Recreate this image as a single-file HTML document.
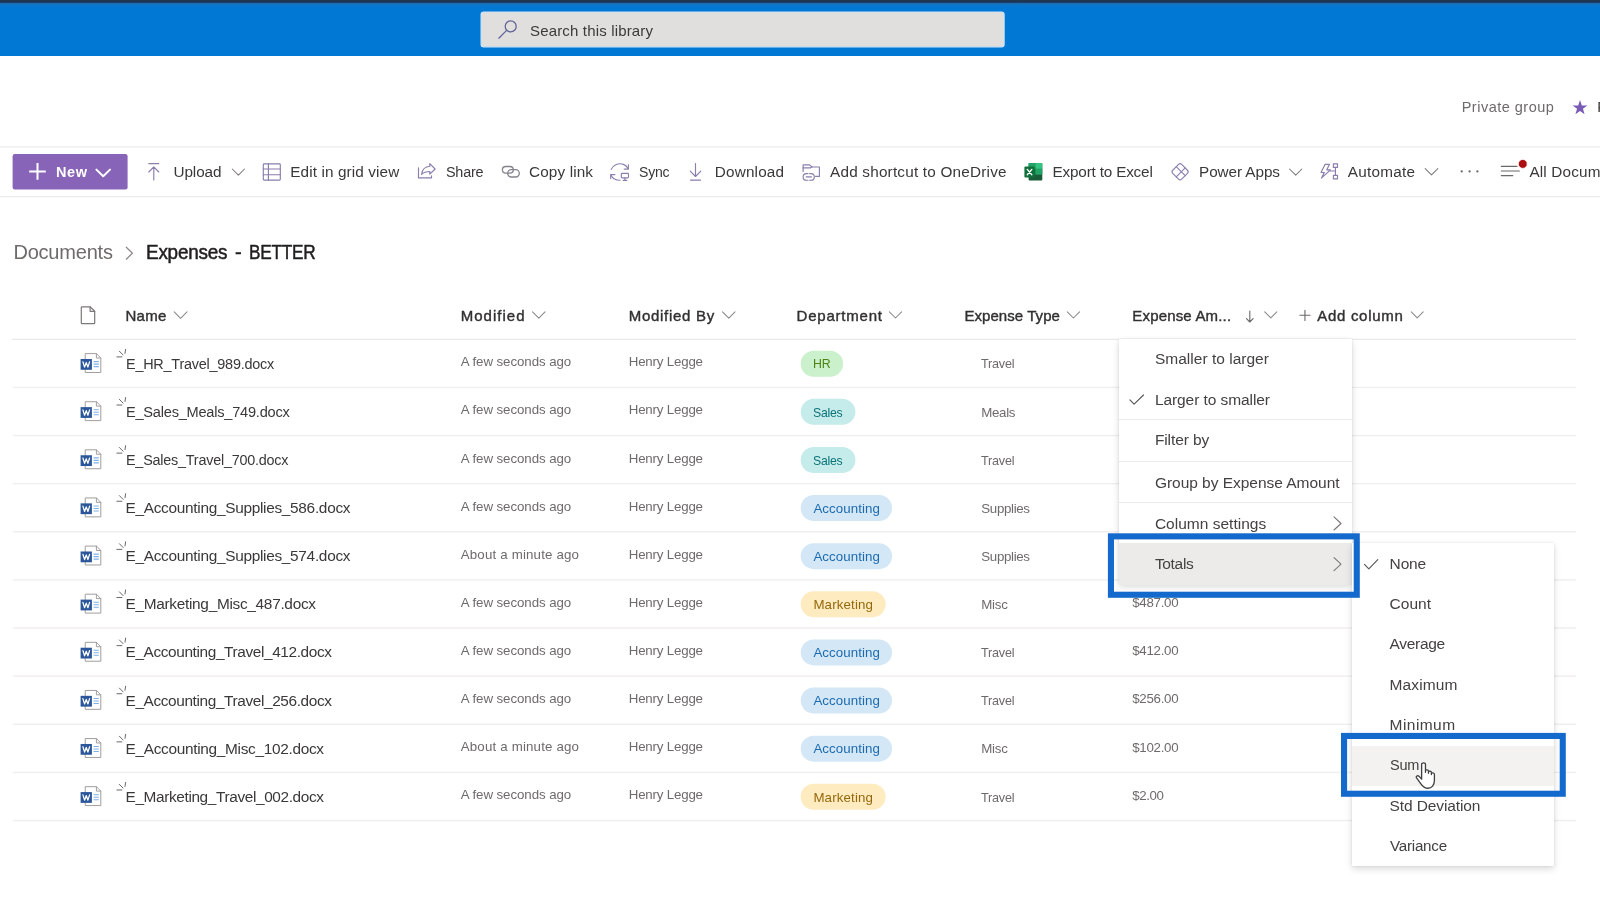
<!DOCTYPE html>
<html><head><meta charset="utf-8"><title>Expenses - BETTER</title>
<style>
html,body{margin:0;padding:0}
body{width:1600px;height:900px;overflow:hidden;background:#fff;font-family:"Liberation Sans",sans-serif}
#page{position:relative;width:1600px;height:900px;overflow:hidden;background:#fff}
.t{position:absolute;white-space:nowrap;line-height:1}
.tl{position:absolute;left:0;top:0;width:1600px;height:900px;will-change:transform}
.b{position:absolute}
.pill{position:absolute;height:26px;border-radius:13px}
.ln{position:absolute;left:12px;width:1564px;height:1px;background:#edebe9}
svg{position:absolute;left:0;top:0;overflow:visible}
.menu{position:absolute;background:#fff;box-shadow:0 3px 7px rgba(0,0,0,.14),0 0 2.5px rgba(0,0,0,.11)}
.sep{position:absolute;left:0;width:100%;height:1px;background:#edebe9}
</style></head>
<body>
<div id="page">
<div class="b" style="left:0;top:0;width:1600px;height:56px;background:linear-gradient(to bottom,#22374b 0,#17365a 2.3px,#1d6bb0 3.3px,#0e75ca 5px,#0078d4 7px,#0078d4 100%)"></div>
<svg width="1600" height="900" viewBox="0 0 1600 900" shape-rendering="auto"><rect x="481.1" y="12" width="523" height="34.8" rx="2.6" fill="#e1dfdd" stroke="#cfe4f6" stroke-width="1.2"/><rect x="12.6" y="154.1" width="115" height="35.3" rx="2.2" fill="#8764b8"/><rect x="0" y="146.3" width="1600" height="1.2" fill="#ebeae9"/><rect x="0" y="196.1" width="1600" height="1.2" fill="#ebeae9"/><rect x="12" y="338.75" width="1564" height="1.1" fill="#e7e6e5"/><rect x="13" y="386.72" width="1563" height="1.4" fill="#f0efee"/><rect x="13" y="434.84" width="1563" height="1.4" fill="#f0efee"/><rect x="13" y="482.96" width="1563" height="1.4" fill="#f0efee"/><rect x="13" y="531.08" width="1563" height="1.4" fill="#f0efee"/><rect x="13" y="579.20" width="1563" height="1.4" fill="#f0efee"/><rect x="13" y="627.32" width="1563" height="1.4" fill="#f0efee"/><rect x="13" y="675.44" width="1563" height="1.4" fill="#f0efee"/><rect x="13" y="723.56" width="1563" height="1.4" fill="#f0efee"/><rect x="13" y="771.68" width="1563" height="1.4" fill="#f0efee"/><rect x="13" y="819.80" width="1563" height="1.4" fill="#f0efee"/></svg>
<svg width="1600" height="900" viewBox="0 0 1600 900"><rect x="800.7" y="350.70" width="42.40" height="26" rx="13" fill="#caf0cc"/>
<rect x="800.7" y="398.82" width="54.70" height="26" rx="13" fill="#c5eceb"/>
<rect x="800.7" y="446.94" width="54.70" height="26" rx="13" fill="#c5eceb"/>
<rect x="800.7" y="495.06" width="91.30" height="26" rx="13" fill="#d4e7f6"/>
<rect x="800.7" y="543.18" width="91.30" height="26" rx="13" fill="#d4e7f6"/>
<rect x="800.7" y="591.30" width="84.90" height="26" rx="13" fill="#ffebc0"/>
<rect x="800.7" y="639.42" width="91.30" height="26" rx="13" fill="#d4e7f6"/>
<rect x="800.7" y="687.54" width="91.30" height="26" rx="13" fill="#d4e7f6"/>
<rect x="800.7" y="735.66" width="91.30" height="26" rx="13" fill="#d4e7f6"/>
<rect x="800.7" y="783.78" width="84.90" height="26" rx="13" fill="#ffebc0"/></svg>
<div class="tl"><span class="t" id="t0" style="left:530.00px;top:23.30px;font-size:15px;color:#3b3a39;letter-spacing:0.164px;">Search this library</span>
<span class="t" id="t1" style="left:1461.70px;top:99.73px;font-size:14.5px;color:#6e6c6a;letter-spacing:0.496px;">Private group</span>
<span class="t" id="t2" style="left:1597.20px;top:99.73px;font-size:14.5px;color:#3a3938;letter-spacing:-0.156px;">Following</span>
<span class="t" id="t3" style="left:56.00px;top:164.83px;font-size:14.5px;color:#ffffff;font-weight:700;letter-spacing:0.586px;">New</span>
<span class="t" id="t4" style="left:173.50px;top:164.15px;font-size:15.3px;color:#3a3938;letter-spacing:-0.097px;">Upload</span>
<span class="t" id="t5" style="left:290.30px;top:164.15px;font-size:15.3px;color:#3a3938;letter-spacing:0.111px;">Edit in grid view</span>
<span class="t" id="t6" style="left:445.50px;top:164.15px;font-size:15.3px;color:#3a3938;letter-spacing:-0.25px;transform:scaleX(0.9415);transform-origin:0 0;">Share</span>
<span class="t" id="t7" style="left:529.00px;top:164.15px;font-size:15.3px;color:#3a3938;letter-spacing:0.135px;">Copy link</span>
<span class="t" id="t8" style="left:638.50px;top:164.15px;font-size:15.3px;color:#3a3938;letter-spacing:-0.25px;transform:scaleX(0.9169);transform-origin:0 0;">Sync</span>
<span class="t" id="t9" style="left:714.80px;top:164.15px;font-size:15.3px;color:#3a3938;letter-spacing:0.167px;">Download</span>
<span class="t" id="t10" style="left:830.00px;top:164.15px;font-size:15.3px;color:#3a3938;letter-spacing:0.211px;">Add shortcut to OneDrive</span>
<span class="t" id="t11" style="left:1052.50px;top:164.15px;font-size:15.3px;color:#3a3938;letter-spacing:-0.184px;">Export to Excel</span>
<span class="t" id="t12" style="left:1199.00px;top:164.15px;font-size:15.3px;color:#3a3938;letter-spacing:-0.071px;">Power Apps</span>
<span class="t" id="t13" style="left:1347.80px;top:164.15px;font-size:15.3px;color:#3a3938;letter-spacing:0.245px;">Automate</span>
<span class="t" id="t14" style="left:1529.40px;top:164.15px;font-size:15.3px;color:#3a3938;letter-spacing:0.162px;">All Docum</span>
<span class="t" id="t15" style="left:13.40px;top:242.07px;font-size:20px;color:#6e6c6a;letter-spacing:-0.195px;">Documents</span>
<span class="t" id="t16" style="left:146.00px;top:242.07px;font-size:20px;color:#201f1e;-webkit-text-stroke:0.5px #201f1e;letter-spacing:-0.25px;transform:scaleX(0.9455);transform-origin:0 0;">Expenses</span>
<span class="t" id="t17" style="left:235.00px;top:242.07px;font-size:20px;color:#201f1e;-webkit-text-stroke:0.5px #201f1e;">-</span>
<span class="t" id="t18" style="left:248.80px;top:242.07px;font-size:20px;color:#201f1e;-webkit-text-stroke:0.5px #201f1e;letter-spacing:-0.25px;transform:scaleX(0.8602);transform-origin:0 0;">BETTER</span>
<span class="t" id="t19" style="left:125.40px;top:307.90px;font-size:15px;color:#323130;-webkit-text-stroke:0.4px #323130;letter-spacing:0.328px;">Name</span>
<span class="t" id="t20" style="left:460.75px;top:307.90px;font-size:15px;color:#323130;-webkit-text-stroke:0.4px #323130;letter-spacing:1.007px;">Modified</span>
<span class="t" id="t21" style="left:628.75px;top:307.90px;font-size:15px;color:#323130;-webkit-text-stroke:0.4px #323130;letter-spacing:0.713px;">Modified By</span>
<span class="t" id="t22" style="left:796.60px;top:307.90px;font-size:15px;color:#323130;-webkit-text-stroke:0.4px #323130;letter-spacing:0.781px;">Department</span>
<span class="t" id="t23" style="left:964.40px;top:307.90px;font-size:15px;color:#323130;-webkit-text-stroke:0.4px #323130;letter-spacing:0.064px;">Expense Type</span>
<span class="t" id="t24" style="left:1132.30px;top:307.90px;font-size:15px;color:#323130;-webkit-text-stroke:0.4px #323130;letter-spacing:0.173px;">Expense Am...</span>
<span class="t" id="t25" style="left:1317.20px;top:307.90px;font-size:15px;color:#323130;-webkit-text-stroke:0.4px #323130;letter-spacing:0.709px;">Add column</span>
<span class="t" id="t26" style="left:125.50px;top:355.71px;font-size:15.4px;color:#3a3938;letter-spacing:-0.25px;transform:scaleX(0.9378);transform-origin:0 0;">E_HR_Travel_989.docx</span>
<span class="t" id="t27" style="left:460.75px;top:355.34px;font-size:13.3px;color:#6e6c6a;letter-spacing:-0.070px;">A few seconds ago</span>
<span class="t" id="t28" style="left:628.75px;top:355.34px;font-size:13.3px;color:#6e6c6a;letter-spacing:-0.189px;">Henry Legge</span>
<span class="t" id="t29" style="left:813.40px;top:357.49px;font-size:13.3px;color:#4d8414;letter-spacing:-0.25px;transform:scaleX(0.9278);transform-origin:0 0;">HR</span>
<span class="t" id="t30" style="left:981.30px;top:357.49px;font-size:13.3px;color:#6e6c6a;letter-spacing:-0.25px;transform:scaleX(0.9516);transform-origin:0 0;">Travel</span>
<span class="t" id="t31" style="left:125.50px;top:403.83px;font-size:15.4px;color:#3a3938;letter-spacing:-0.25px;transform:scaleX(0.9481);transform-origin:0 0;">E_Sales_Meals_749.docx</span>
<span class="t" id="t32" style="left:460.75px;top:403.46px;font-size:13.3px;color:#6e6c6a;letter-spacing:-0.070px;">A few seconds ago</span>
<span class="t" id="t33" style="left:628.75px;top:403.46px;font-size:13.3px;color:#6e6c6a;letter-spacing:-0.189px;">Henry Legge</span>
<span class="t" id="t34" style="left:813.40px;top:405.61px;font-size:13.3px;color:#0c7378;letter-spacing:-0.25px;transform:scaleX(0.9205);transform-origin:0 0;">Sales</span>
<span class="t" id="t35" style="left:981.30px;top:405.61px;font-size:13.3px;color:#6e6c6a;letter-spacing:-0.346px;">Meals</span>
<span class="t" id="t36" style="left:125.50px;top:451.95px;font-size:15.4px;color:#3a3938;letter-spacing:-0.25px;transform:scaleX(0.9360);transform-origin:0 0;">E_Sales_Travel_700.docx</span>
<span class="t" id="t37" style="left:460.75px;top:451.58px;font-size:13.3px;color:#6e6c6a;letter-spacing:-0.070px;">A few seconds ago</span>
<span class="t" id="t38" style="left:628.75px;top:451.58px;font-size:13.3px;color:#6e6c6a;letter-spacing:-0.189px;">Henry Legge</span>
<span class="t" id="t39" style="left:813.40px;top:453.73px;font-size:13.3px;color:#0c7378;letter-spacing:-0.25px;transform:scaleX(0.9205);transform-origin:0 0;">Sales</span>
<span class="t" id="t40" style="left:981.30px;top:453.73px;font-size:13.3px;color:#6e6c6a;letter-spacing:-0.25px;transform:scaleX(0.9516);transform-origin:0 0;">Travel</span>
<span class="t" id="t41" style="left:125.50px;top:500.07px;font-size:15.4px;color:#3a3938;letter-spacing:-0.297px;">E_Accounting_Supplies_586.docx</span>
<span class="t" id="t42" style="left:460.75px;top:499.70px;font-size:13.3px;color:#6e6c6a;letter-spacing:-0.070px;">A few seconds ago</span>
<span class="t" id="t43" style="left:628.75px;top:499.70px;font-size:13.3px;color:#6e6c6a;letter-spacing:-0.189px;">Henry Legge</span>
<span class="t" id="t44" style="left:813.40px;top:501.85px;font-size:13.3px;color:#1c6bb0;letter-spacing:0.089px;">Accounting</span>
<span class="t" id="t45" style="left:981.30px;top:501.85px;font-size:13.3px;color:#6e6c6a;letter-spacing:-0.331px;">Supplies</span>
<span class="t" id="t46" style="left:125.50px;top:548.19px;font-size:15.4px;color:#3a3938;letter-spacing:-0.297px;">E_Accounting_Supplies_574.docx</span>
<span class="t" id="t47" style="left:460.75px;top:547.82px;font-size:13.3px;color:#6e6c6a;letter-spacing:0.172px;">About a minute ago</span>
<span class="t" id="t48" style="left:628.75px;top:547.82px;font-size:13.3px;color:#6e6c6a;letter-spacing:-0.189px;">Henry Legge</span>
<span class="t" id="t49" style="left:813.40px;top:549.97px;font-size:13.3px;color:#1c6bb0;letter-spacing:0.089px;">Accounting</span>
<span class="t" id="t50" style="left:981.30px;top:549.97px;font-size:13.3px;color:#6e6c6a;letter-spacing:-0.331px;">Supplies</span>
<span class="t" id="t51" style="left:125.50px;top:596.31px;font-size:15.4px;color:#3a3938;letter-spacing:-0.297px;">E_Marketing_Misc_487.docx</span>
<span class="t" id="t52" style="left:460.75px;top:595.94px;font-size:13.3px;color:#6e6c6a;letter-spacing:-0.070px;">A few seconds ago</span>
<span class="t" id="t53" style="left:628.75px;top:595.94px;font-size:13.3px;color:#6e6c6a;letter-spacing:-0.189px;">Henry Legge</span>
<span class="t" id="t54" style="left:813.40px;top:598.09px;font-size:13.3px;color:#94690c;letter-spacing:0.151px;">Marketing</span>
<span class="t" id="t55" style="left:981.30px;top:598.09px;font-size:13.3px;color:#6e6c6a;letter-spacing:-0.276px;">Misc</span>
<span class="t" id="t56" style="left:1132.20px;top:596.24px;font-size:13.3px;color:#6e6c6a;letter-spacing:-0.280px;">$487.00</span>
<span class="t" id="t57" style="left:125.50px;top:644.43px;font-size:15.4px;color:#3a3938;letter-spacing:-0.380px;">E_Accounting_Travel_412.docx</span>
<span class="t" id="t58" style="left:460.75px;top:644.06px;font-size:13.3px;color:#6e6c6a;letter-spacing:-0.070px;">A few seconds ago</span>
<span class="t" id="t59" style="left:628.75px;top:644.06px;font-size:13.3px;color:#6e6c6a;letter-spacing:-0.189px;">Henry Legge</span>
<span class="t" id="t60" style="left:813.40px;top:646.21px;font-size:13.3px;color:#1c6bb0;letter-spacing:0.089px;">Accounting</span>
<span class="t" id="t61" style="left:981.30px;top:646.21px;font-size:13.3px;color:#6e6c6a;letter-spacing:-0.25px;transform:scaleX(0.9516);transform-origin:0 0;">Travel</span>
<span class="t" id="t62" style="left:1132.20px;top:644.36px;font-size:13.3px;color:#6e6c6a;letter-spacing:-0.280px;">$412.00</span>
<span class="t" id="t63" style="left:125.50px;top:692.55px;font-size:15.4px;color:#3a3938;letter-spacing:-0.380px;">E_Accounting_Travel_256.docx</span>
<span class="t" id="t64" style="left:460.75px;top:692.18px;font-size:13.3px;color:#6e6c6a;letter-spacing:-0.070px;">A few seconds ago</span>
<span class="t" id="t65" style="left:628.75px;top:692.18px;font-size:13.3px;color:#6e6c6a;letter-spacing:-0.189px;">Henry Legge</span>
<span class="t" id="t66" style="left:813.40px;top:694.33px;font-size:13.3px;color:#1c6bb0;letter-spacing:0.089px;">Accounting</span>
<span class="t" id="t67" style="left:981.30px;top:694.33px;font-size:13.3px;color:#6e6c6a;letter-spacing:-0.25px;transform:scaleX(0.9516);transform-origin:0 0;">Travel</span>
<span class="t" id="t68" style="left:1132.20px;top:692.48px;font-size:13.3px;color:#6e6c6a;letter-spacing:-0.280px;">$256.00</span>
<span class="t" id="t69" style="left:125.50px;top:740.67px;font-size:15.4px;color:#3a3938;letter-spacing:-0.308px;">E_Accounting_Misc_102.docx</span>
<span class="t" id="t70" style="left:460.75px;top:740.30px;font-size:13.3px;color:#6e6c6a;letter-spacing:0.172px;">About a minute ago</span>
<span class="t" id="t71" style="left:628.75px;top:740.30px;font-size:13.3px;color:#6e6c6a;letter-spacing:-0.189px;">Henry Legge</span>
<span class="t" id="t72" style="left:813.40px;top:742.45px;font-size:13.3px;color:#1c6bb0;letter-spacing:0.089px;">Accounting</span>
<span class="t" id="t73" style="left:981.30px;top:742.45px;font-size:13.3px;color:#6e6c6a;letter-spacing:-0.276px;">Misc</span>
<span class="t" id="t74" style="left:1132.20px;top:740.60px;font-size:13.3px;color:#6e6c6a;letter-spacing:-0.280px;">$102.00</span>
<span class="t" id="t75" style="left:125.50px;top:788.79px;font-size:15.4px;color:#3a3938;letter-spacing:-0.372px;">E_Marketing_Travel_002.docx</span>
<span class="t" id="t76" style="left:460.75px;top:788.42px;font-size:13.3px;color:#6e6c6a;letter-spacing:-0.070px;">A few seconds ago</span>
<span class="t" id="t77" style="left:628.75px;top:788.42px;font-size:13.3px;color:#6e6c6a;letter-spacing:-0.189px;">Henry Legge</span>
<span class="t" id="t78" style="left:813.40px;top:790.57px;font-size:13.3px;color:#94690c;letter-spacing:0.151px;">Marketing</span>
<span class="t" id="t79" style="left:981.30px;top:790.57px;font-size:13.3px;color:#6e6c6a;letter-spacing:-0.25px;transform:scaleX(0.9516);transform-origin:0 0;">Travel</span>
<span class="t" id="t80" style="left:1132.20px;top:788.72px;font-size:13.3px;color:#6e6c6a;letter-spacing:-0.395px;">$2.00</span></div>
<svg width="1600" height="900" viewBox="0 0 1600 900" fill="none" stroke-linecap="round" stroke-linejoin="round">
<g stroke="#5f6296" stroke-width="1.25"><circle cx="510.7" cy="26.4" r="5.5"/><path d="M506.6 30.4 L498.8 38.2"/></g>
<polygon points="1580.00,100.10 1581.82,105.39 1587.42,105.49 1582.95,108.86 1584.58,114.21 1580.00,111.00 1575.42,114.21 1577.05,108.86 1572.58,105.49 1578.18,105.39" fill="#7a5cb5" stroke="none"/>
<g stroke="#fff" stroke-width="2" stroke-linecap="butt"><path d="M29.2 171.4 H45.8 M37.5 163.1 V179.7"/></g>
<polyline points="96.4,169.6 103.2,176.2 110,169.6" stroke="#fff" stroke-width="2"/>
<g stroke="#8b7dac" stroke-width="1.15"><path d="M148.8 163.6 H158.8 M153.8 166.9 V180 M148.8 172 L153.8 166.9 L158.8 172"/></g>
<polyline points="232.3,169.0 238.4,175.1 244.5,169.0" stroke="#7d7b79" stroke-width="1.05"/>
<g stroke="#8b7dac" stroke-width="1.15"><rect x="263.3" y="163.9" width="17" height="16.2" rx="0.8"/><path d="M263.3 169 H280.3 M263.3 174.7 H280.3 M268.4 163.9 V180.1"/></g>
<g stroke="#8b7dac" stroke-width="1.15"><path d="M418.5 167.7 V177.9 H431.5 V175.8"/><path d="M421.6 174.4 C422.2 169.8 425 166.6 429.8 166.3 V163.6 L435.1 169 L429.8 174.2 V171.5 C426.2 171.5 423.6 172.4 421.6 174.4 Z"/></g>
<g stroke="#85838c" stroke-width="1.3"><rect x="502.4" y="166.5" width="10.9" height="6.7" rx="3.35"/><rect x="507.7" y="169.7" width="11.6" height="7.3" rx="3.65"/></g>
<g stroke="#8b7dac" stroke-width="1.15"><path d="M611.2 169.4 C612.6 165.4 618.2 162.4 623.4 164.4 C625.5 165.3 627 166.6 627.9 168.4"/><path d="M628.4 164.8 V169.1 H624.2"/><path d="M611 175.2 C612.6 178.4 616 180.2 620 180.2"/><path d="M610.7 178.6 V174.6 H614.9"/><rect x="621.3" y="173.3" width="7.2" height="4.6" rx="0.9"/><path d="M624.9 177.9 V180 M623.2 180.3 H626.8"/></g>
<g stroke="#8b7dac" stroke-width="1.15"><path d="M695.5 163.6 V176.4 M690.2 171.2 L695.5 176.5 L700.8 171.2 M690.5 180.1 H700.5"/></g>
<g stroke="#8b7dac" stroke-width="1.15"><path d="M803.1 171.6 V164.8 H809.6 L812 167 H819.4 V176.4 H815.6"/><path d="M803.1 167.9 H810.2 L812 167"/><path d="M808 173.6 H806.4 A3.3 3.3 0 0 0 806.4 180.2 H808 M809.6 173.6 H811 A3.3 3.3 0 0 1 811 180.2 H809.6"/><path d="M806.2 176.9 H811.4"/></g>
<g stroke="none"><rect x="1028.6" y="163" width="13.7" height="17.6" rx="1" fill="#185c37"/><rect x="1028.6" y="163" width="6.9" height="5.9" fill="#21a366"/><rect x="1035.4" y="163" width="6.9" height="5.9" fill="#33c481"/><rect x="1028.6" y="168.8" width="6.9" height="5.9" fill="#107c41"/><rect x="1035.4" y="168.8" width="6.9" height="5.9" fill="#21a366"/><rect x="1024.4" y="166.6" width="10.3" height="10.8" rx="1" fill="#0f703b"/></g>
<path d="M1027.3 169.4 L1031.8 174.7 M1031.8 169.4 L1027.3 174.7" stroke="#fff" stroke-width="1.4"/>
<g stroke="#8b7dac" stroke-width="1.1" transform="translate(1180.1 171.8) rotate(45)"><rect x="-6.3" y="-6.3" width="12.6" height="12.6" rx="2.2"/><path d="M-6.3 -0.9 H6.3 M0.9 -6.3 V6.3"/></g>
<polyline points="1289.5,169.0 1295.7,175.2 1301.9,169.0" stroke="#7d7b79" stroke-width="1.05"/>
<g stroke="#8b7dac" stroke-width="1.15"><path d="M1325 164.4 H1329.4 L1326.8 169.8 H1330.4 L1321.4 178.2 L1324.3 172.5 H1321 Z"/><rect x="1333.4" y="163.9" width="4.1" height="3.5"/><rect x="1333.4" y="175.3" width="4.1" height="3.6"/><path d="M1335.45 167.4 V175.3 M1330.2 171 H1335.45"/></g>
<polyline points="1425.2,168.6 1431.5,174.9 1437.8,168.6" stroke="#7d7b79" stroke-width="1.05"/>
<g fill="#6b6967" stroke="none"><circle cx="1461.7" cy="171.4" r="1.15"/><circle cx="1469.6" cy="171.4" r="1.15"/><circle cx="1477.4" cy="171.4" r="1.15"/></g>
<g stroke="#6b6967" stroke-width="1.1"><path d="M1501.3 166.4 H1517 M1501.3 171 H1519.4 M1501.3 175.6 H1512.8"/></g>
<circle cx="1522.8" cy="163.9" r="4.5" fill="#ad0c10" stroke="#fff" stroke-width="0.8"/>
<polyline points="126.3,247.2 132.4,253.2 126.3,259.2" stroke="#8a8886" stroke-width="1.2"/>
<g stroke="#7c7a78" stroke-width="1.2"><path d="M81.9 306.8 H90.1 L94.7 311.3 V323 Q94.7 323.6 94.1 323.6 H81.9 Q81.3 323.6 81.3 323 V307.4 Q81.3 306.8 81.9 306.8 Z"/><path d="M90.1 306.8 V311.3 H94.7"/></g>
<polyline points="174.2,311.9 180.6,318.3 187.0,311.9" stroke="#8c8a88" stroke-width="1.05"/>
<polyline points="532.5,311.9 538.8,318.1 545.0,311.9" stroke="#8c8a88" stroke-width="1.05"/>
<polyline points="722.5,311.9 728.8,318.1 735.0,311.9" stroke="#8c8a88" stroke-width="1.05"/>
<polyline points="889.4,311.9 895.5,318.0 901.6,311.9" stroke="#8c8a88" stroke-width="1.05"/>
<polyline points="1067.3,311.9 1073.4,318.0 1079.6,311.9" stroke="#8c8a88" stroke-width="1.05"/>
<polyline points="1264.7,311.9 1270.8,317.9 1276.8,311.9" stroke="#8c8a88" stroke-width="1.05"/>
<polyline points="1411.3,311.9 1417.2,317.9 1423.2,311.9" stroke="#8c8a88" stroke-width="1.05"/>
<g stroke="#6b6967" stroke-width="1.1"><path d="M1249.8 311 V322 M1246.5 318.7 L1249.8 322 L1253.1 318.7"/><path d="M1299.9 315.3 H1310 M1304.95 310.3 V320.4"/></g>
<g transform="translate(0 339.30)"><path d="M85.6 14.3 H96.4 L100.8 18.7 V33.2 H85.6 Z" fill="#fff" stroke="#a19f9d" stroke-width="1"/><path d="M96.4 14.3 V18.7 H100.8" stroke="#a19f9d" stroke-width="1"/><path d="M93.6 22.3 H98.8 M93.6 24.8 H98.8 M93.6 27.3 H98.8" stroke="#7fb0e6" stroke-width="1.1" stroke-linecap="butt"/><rect x="80.6" y="19.7" width="11.3" height="10.8" fill="#2b579a" stroke="none"/><polyline points="82.9,22.5 84.6,27.8 86.25,23.2 87.9,27.8 89.6,22.5" stroke="#fff" stroke-width="1.25"/><g stroke="#6b6967" stroke-width="1"><path d="M116.9 17.6 H121.9 M119.4 11.95 L123.1 15.7 M125.6 10.1 L125 14.1"/></g></g>
<g transform="translate(0 387.42)"><path d="M85.6 14.3 H96.4 L100.8 18.7 V33.2 H85.6 Z" fill="#fff" stroke="#a19f9d" stroke-width="1"/><path d="M96.4 14.3 V18.7 H100.8" stroke="#a19f9d" stroke-width="1"/><path d="M93.6 22.3 H98.8 M93.6 24.8 H98.8 M93.6 27.3 H98.8" stroke="#7fb0e6" stroke-width="1.1" stroke-linecap="butt"/><rect x="80.6" y="19.7" width="11.3" height="10.8" fill="#2b579a" stroke="none"/><polyline points="82.9,22.5 84.6,27.8 86.25,23.2 87.9,27.8 89.6,22.5" stroke="#fff" stroke-width="1.25"/><g stroke="#6b6967" stroke-width="1"><path d="M116.9 17.6 H121.9 M119.4 11.95 L123.1 15.7 M125.6 10.1 L125 14.1"/></g></g>
<g transform="translate(0 435.54)"><path d="M85.6 14.3 H96.4 L100.8 18.7 V33.2 H85.6 Z" fill="#fff" stroke="#a19f9d" stroke-width="1"/><path d="M96.4 14.3 V18.7 H100.8" stroke="#a19f9d" stroke-width="1"/><path d="M93.6 22.3 H98.8 M93.6 24.8 H98.8 M93.6 27.3 H98.8" stroke="#7fb0e6" stroke-width="1.1" stroke-linecap="butt"/><rect x="80.6" y="19.7" width="11.3" height="10.8" fill="#2b579a" stroke="none"/><polyline points="82.9,22.5 84.6,27.8 86.25,23.2 87.9,27.8 89.6,22.5" stroke="#fff" stroke-width="1.25"/><g stroke="#6b6967" stroke-width="1"><path d="M116.9 17.6 H121.9 M119.4 11.95 L123.1 15.7 M125.6 10.1 L125 14.1"/></g></g>
<g transform="translate(0 483.66)"><path d="M85.6 14.3 H96.4 L100.8 18.7 V33.2 H85.6 Z" fill="#fff" stroke="#a19f9d" stroke-width="1"/><path d="M96.4 14.3 V18.7 H100.8" stroke="#a19f9d" stroke-width="1"/><path d="M93.6 22.3 H98.8 M93.6 24.8 H98.8 M93.6 27.3 H98.8" stroke="#7fb0e6" stroke-width="1.1" stroke-linecap="butt"/><rect x="80.6" y="19.7" width="11.3" height="10.8" fill="#2b579a" stroke="none"/><polyline points="82.9,22.5 84.6,27.8 86.25,23.2 87.9,27.8 89.6,22.5" stroke="#fff" stroke-width="1.25"/><g stroke="#6b6967" stroke-width="1"><path d="M116.9 17.6 H121.9 M119.4 11.95 L123.1 15.7 M125.6 10.1 L125 14.1"/></g></g>
<g transform="translate(0 531.78)"><path d="M85.6 14.3 H96.4 L100.8 18.7 V33.2 H85.6 Z" fill="#fff" stroke="#a19f9d" stroke-width="1"/><path d="M96.4 14.3 V18.7 H100.8" stroke="#a19f9d" stroke-width="1"/><path d="M93.6 22.3 H98.8 M93.6 24.8 H98.8 M93.6 27.3 H98.8" stroke="#7fb0e6" stroke-width="1.1" stroke-linecap="butt"/><rect x="80.6" y="19.7" width="11.3" height="10.8" fill="#2b579a" stroke="none"/><polyline points="82.9,22.5 84.6,27.8 86.25,23.2 87.9,27.8 89.6,22.5" stroke="#fff" stroke-width="1.25"/><g stroke="#6b6967" stroke-width="1"><path d="M116.9 17.6 H121.9 M119.4 11.95 L123.1 15.7 M125.6 10.1 L125 14.1"/></g></g>
<g transform="translate(0 579.90)"><path d="M85.6 14.3 H96.4 L100.8 18.7 V33.2 H85.6 Z" fill="#fff" stroke="#a19f9d" stroke-width="1"/><path d="M96.4 14.3 V18.7 H100.8" stroke="#a19f9d" stroke-width="1"/><path d="M93.6 22.3 H98.8 M93.6 24.8 H98.8 M93.6 27.3 H98.8" stroke="#7fb0e6" stroke-width="1.1" stroke-linecap="butt"/><rect x="80.6" y="19.7" width="11.3" height="10.8" fill="#2b579a" stroke="none"/><polyline points="82.9,22.5 84.6,27.8 86.25,23.2 87.9,27.8 89.6,22.5" stroke="#fff" stroke-width="1.25"/><g stroke="#6b6967" stroke-width="1"><path d="M116.9 17.6 H121.9 M119.4 11.95 L123.1 15.7 M125.6 10.1 L125 14.1"/></g></g>
<g transform="translate(0 628.02)"><path d="M85.6 14.3 H96.4 L100.8 18.7 V33.2 H85.6 Z" fill="#fff" stroke="#a19f9d" stroke-width="1"/><path d="M96.4 14.3 V18.7 H100.8" stroke="#a19f9d" stroke-width="1"/><path d="M93.6 22.3 H98.8 M93.6 24.8 H98.8 M93.6 27.3 H98.8" stroke="#7fb0e6" stroke-width="1.1" stroke-linecap="butt"/><rect x="80.6" y="19.7" width="11.3" height="10.8" fill="#2b579a" stroke="none"/><polyline points="82.9,22.5 84.6,27.8 86.25,23.2 87.9,27.8 89.6,22.5" stroke="#fff" stroke-width="1.25"/><g stroke="#6b6967" stroke-width="1"><path d="M116.9 17.6 H121.9 M119.4 11.95 L123.1 15.7 M125.6 10.1 L125 14.1"/></g></g>
<g transform="translate(0 676.14)"><path d="M85.6 14.3 H96.4 L100.8 18.7 V33.2 H85.6 Z" fill="#fff" stroke="#a19f9d" stroke-width="1"/><path d="M96.4 14.3 V18.7 H100.8" stroke="#a19f9d" stroke-width="1"/><path d="M93.6 22.3 H98.8 M93.6 24.8 H98.8 M93.6 27.3 H98.8" stroke="#7fb0e6" stroke-width="1.1" stroke-linecap="butt"/><rect x="80.6" y="19.7" width="11.3" height="10.8" fill="#2b579a" stroke="none"/><polyline points="82.9,22.5 84.6,27.8 86.25,23.2 87.9,27.8 89.6,22.5" stroke="#fff" stroke-width="1.25"/><g stroke="#6b6967" stroke-width="1"><path d="M116.9 17.6 H121.9 M119.4 11.95 L123.1 15.7 M125.6 10.1 L125 14.1"/></g></g>
<g transform="translate(0 724.26)"><path d="M85.6 14.3 H96.4 L100.8 18.7 V33.2 H85.6 Z" fill="#fff" stroke="#a19f9d" stroke-width="1"/><path d="M96.4 14.3 V18.7 H100.8" stroke="#a19f9d" stroke-width="1"/><path d="M93.6 22.3 H98.8 M93.6 24.8 H98.8 M93.6 27.3 H98.8" stroke="#7fb0e6" stroke-width="1.1" stroke-linecap="butt"/><rect x="80.6" y="19.7" width="11.3" height="10.8" fill="#2b579a" stroke="none"/><polyline points="82.9,22.5 84.6,27.8 86.25,23.2 87.9,27.8 89.6,22.5" stroke="#fff" stroke-width="1.25"/><g stroke="#6b6967" stroke-width="1"><path d="M116.9 17.6 H121.9 M119.4 11.95 L123.1 15.7 M125.6 10.1 L125 14.1"/></g></g>
<g transform="translate(0 772.38)"><path d="M85.6 14.3 H96.4 L100.8 18.7 V33.2 H85.6 Z" fill="#fff" stroke="#a19f9d" stroke-width="1"/><path d="M96.4 14.3 V18.7 H100.8" stroke="#a19f9d" stroke-width="1"/><path d="M93.6 22.3 H98.8 M93.6 24.8 H98.8 M93.6 27.3 H98.8" stroke="#7fb0e6" stroke-width="1.1" stroke-linecap="butt"/><rect x="80.6" y="19.7" width="11.3" height="10.8" fill="#2b579a" stroke="none"/><polyline points="82.9,22.5 84.6,27.8 86.25,23.2 87.9,27.8 89.6,22.5" stroke="#fff" stroke-width="1.25"/><g stroke="#6b6967" stroke-width="1"><path d="M116.9 17.6 H121.9 M119.4 11.95 L123.1 15.7 M125.6 10.1 L125 14.1"/></g></g>
</svg>
<div class="menu" style="left:1118.7px;top:338.6px;width:233.7px;height:245.9px"><div class="sep" style="top:80.2px"></div><div class="sep" style="top:122px"></div><div class="sep" style="top:163.1px"></div><div class="b" style="left:0;top:204px;width:100%;height:42px;background:#edebe9"></div></div>
<div class="menu" style="left:1352.3px;top:543.3px;width:201.5px;height:322.3px"><div class="b" style="left:0;top:202.3px;width:100%;height:40px;background:#f3f2f1"></div></div>
<div class="tl"><span class="t" id="t81" style="left:1154.90px;top:351.38px;font-size:15.5px;color:#444241;letter-spacing:0.018px;">Smaller to larger</span>
<span class="t" id="t82" style="left:1154.90px;top:391.78px;font-size:15.5px;color:#444241;letter-spacing:-0.075px;">Larger to smaller</span>
<span class="t" id="t83" style="left:1154.90px;top:432.48px;font-size:15.5px;color:#444241;letter-spacing:-0.091px;">Filter by</span>
<span class="t" id="t84" style="left:1154.90px;top:474.68px;font-size:15.5px;color:#444241;letter-spacing:-0.026px;">Group by Expense Amount</span>
<span class="t" id="t85" style="left:1154.90px;top:515.78px;font-size:15.5px;color:#444241;letter-spacing:0.011px;">Column settings</span>
<span class="t" id="t86" style="left:1154.90px;top:555.78px;font-size:15.5px;color:#444241;letter-spacing:-0.320px;">Totals</span>
<span class="t" id="t87" style="left:1389.60px;top:555.78px;font-size:15.5px;color:#444241;letter-spacing:-0.154px;">None</span>
<span class="t" id="t88" style="left:1389.60px;top:596.10px;font-size:15.5px;color:#444241;letter-spacing:0.031px;">Count</span>
<span class="t" id="t89" style="left:1389.60px;top:636.42px;font-size:15.5px;color:#444241;letter-spacing:-0.326px;">Average</span>
<span class="t" id="t90" style="left:1389.60px;top:676.74px;font-size:15.5px;color:#444241;letter-spacing:0.088px;">Maximum</span>
<span class="t" id="t91" style="left:1389.60px;top:717.06px;font-size:15.5px;color:#444241;letter-spacing:0.438px;">Minimum</span>
<span class="t" id="t92" style="left:1389.60px;top:757.38px;font-size:15.5px;color:#444241;letter-spacing:-0.25px;transform:scaleX(0.9371);transform-origin:0 0;">Sum</span>
<span class="t" id="t93" style="left:1389.60px;top:797.70px;font-size:15.5px;color:#444241;letter-spacing:-0.117px;">Std Deviation</span>
<span class="t" id="t94" style="left:1389.60px;top:838.02px;font-size:15.5px;color:#444241;letter-spacing:-0.25px;transform:scaleX(0.9797);transform-origin:0 0;">Variance</span></div>
<svg width="1600" height="900" viewBox="0 0 1600 900" fill="none" stroke-linecap="round" stroke-linejoin="round">
<polyline points="1129.9,399.9 1134.1,404.2 1143.5,395" stroke="#5a5856" stroke-width="1.15"/>
<polyline points="1364.5,564.4 1368.8,568.8 1377.8,559.6" stroke="#5a5856" stroke-width="1.15"/>
<polyline points="1334.0,516.9 1341.0,523.5 1334.0,530.0" stroke="#7a7876" stroke-width="1.1"/>
<polyline points="1334.0,557.6 1341.0,564.2 1334.0,570.7" stroke="#7a7876" stroke-width="1.1"/>
<g stroke="#1469cd" stroke-width="6.1" stroke-linejoin="miter"><rect x="1110.95" y="536.35" width="245.8" height="58.4"/><rect x="1344.05" y="735.95" width="218.7" height="57.8"/></g>
<g transform="translate(1415.8 762.4) scale(1.04 1.01)"><path d="M5.6 1.6 C5.6 0.2 9.3 0.2 9.3 1.6 V9.8 V8.3 C9.3 7 12.2 7 12.2 8.5 V10.8 V9.6 C12.2 8.3 15 8.5 15 10 V12 V11 C15 9.9 17.9 10.1 17.9 11.7 V18 C17.9 22.3 15.4 25.6 11.7 25.6 C8.2 25.6 6.6 23.8 4.9 21.2 L0.7 15.4 C-0.4 13.7 1.9 12.4 3.2 13.9 L5.6 16.6 Z" fill="#fff" stroke="#3f3f3f" stroke-width="1.25"/></g>
</svg>
</div>
</body></html>
